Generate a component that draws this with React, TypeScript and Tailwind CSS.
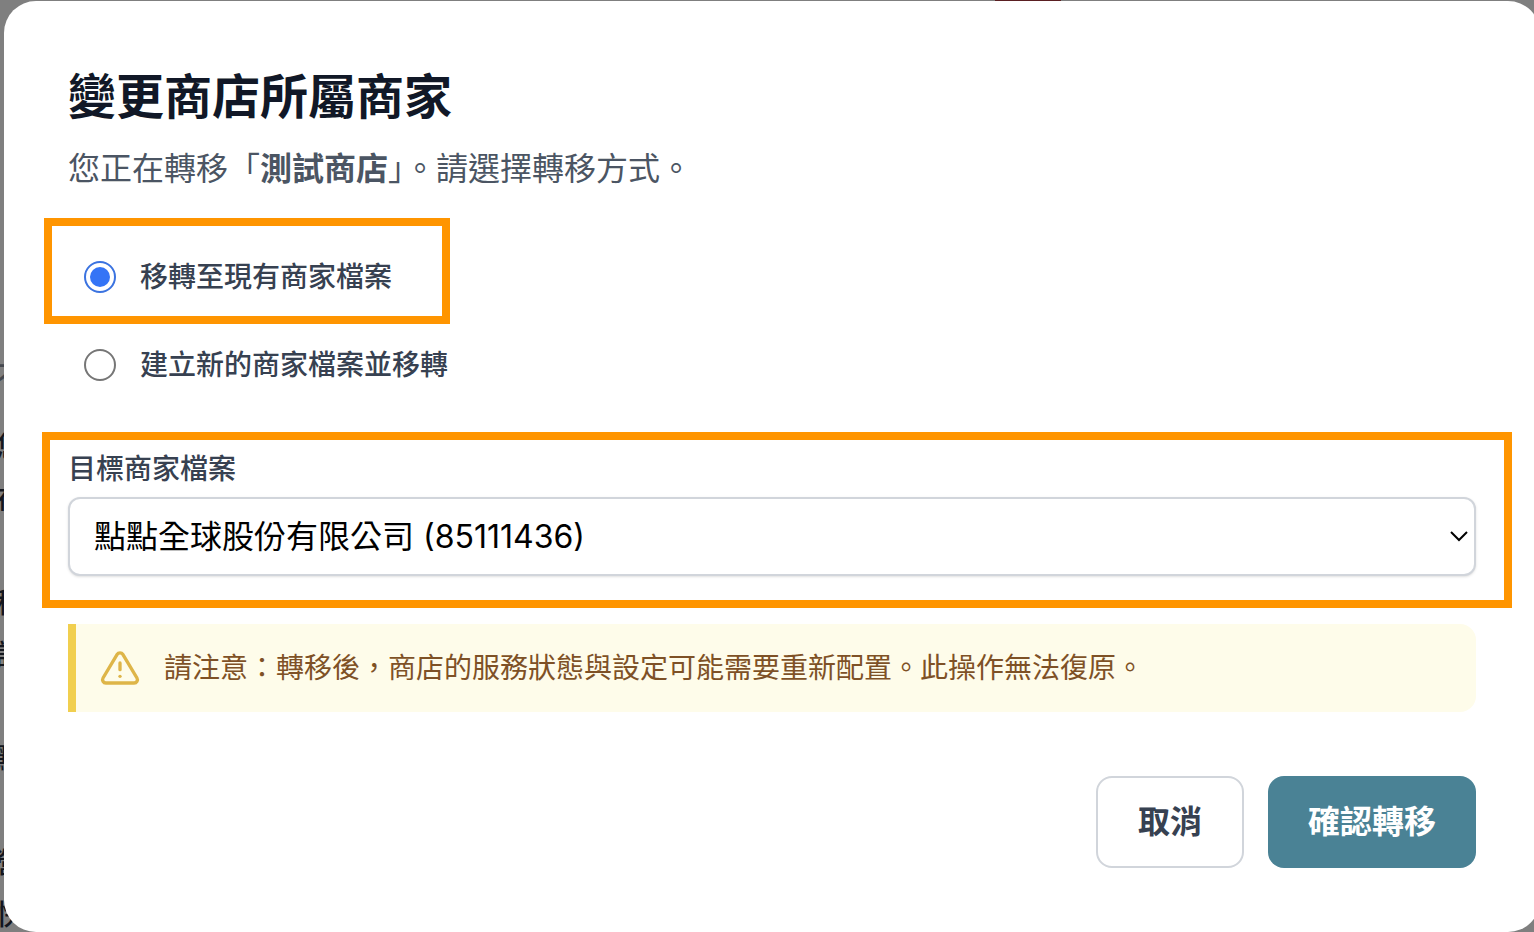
import { useState } from "react";
import { FiAlertTriangle } from "react-icons/fi";

type TransferMode = "existing" | "new";

interface Merchant {
  name: string;
  taxId: string;
}

const merchants: Merchant[] = [{ name: "點點全球股份有限公司", taxId: "85111436" }];

const modes: { value: TransferMode; label: string }[] = [
  { value: "existing", label: "移轉至現有商家檔案" },
  { value: "new", label: "建立新的商家檔案並移轉" },
];

// First column of the page text, only its edge shows beside the dialog
const pageEdge = ["您", "在", "", "移", "請", "", "點", "", "營", "快"];

// Orange frame laid over a step the guide wants to point at
const Highlight = ({ className }: { className: string }) => (
  <div className={`pointer-events-none absolute border-8 border-[#ff9500] ${className}`} />
);

export default function App() {
  const [mode, setMode] = useState<TransferMode>("existing");
  const [target, setTarget] = useState(merchants[0].taxId);

  return (
    <div
      lang="zh-Hant"
      className="relative min-h-screen overflow-hidden bg-[#7f7f7f] pl-1 pt-px font-['Inter','Noto_Sans_CJK_TC',sans-serif]"
    >
      {/* Dimmed page behind the dialog */}
      <div className="absolute right-[473px] top-0 h-2 w-[66px] bg-[#5a1f22]" />
      <div
        aria-hidden="true"
        className="absolute top-[351px] -left-1 flex flex-col text-[28px] leading-[52px] font-medium text-[#14171f]"
      >
        <span className="mb-[18px] text-[#45484f]">不</span>
        {pageEdge.map((char, index) => (
          <span key={index} className="h-[52px]">
            {char}
          </span>
        ))}
      </div>

      <div role="dialog" aria-labelledby="dialog-title" className="relative -mr-1.5 rounded-[32px] bg-white p-16">
        <h3 id="dialog-title" className="text-[48px] leading-[64px] font-bold text-[#111827]">
          變更商店所屬商家
        </h3>
        <p className="mt-4 text-[32px] leading-[48px] text-[#4b5563]">
          您正在轉移「<span className="font-bold">測試商店</span>」。請選擇轉移方式。
        </p>

        <div className="mt-12 flex flex-col items-start gap-4">
          {modes.map((m) => (
            <label key={m.value} className="relative flex items-center gap-6 p-4">
              <input
                type="radio"
                name="mode"
                value={m.value}
                checked={mode === m.value}
                onChange={() => setMode(m.value)}
                className="grid size-8 appearance-none place-items-center rounded-full border-2 border-[#767676] before:size-5 before:rounded-full checked:border-[#3b73e0] checked:before:bg-[#3474f6]"
              />
              <span className="text-[28px] leading-10 font-medium text-[#374151]">{m.label}</span>
              {m.value === "existing" && <Highlight className="-top-[23px] -right-[42px] -bottom-[11px] -left-6" />}
            </label>
          ))}
        </div>

        <div className="relative mt-12">
          <label htmlFor="target" className="block text-[28px] leading-10 font-medium text-[#374151]">
            目標商家檔案
          </label>
          <div className="relative mt-2">
            <select
              id="target"
              value={target}
              onChange={(e) => setTarget(e.target.value)}
              className="block h-[79px] w-full appearance-none rounded-xl border-2 border-[#d1d5db] bg-white px-6 text-[32px] leading-[48px] text-black shadow-sm"
            >
              {merchants.map((m) => (
                <option key={m.taxId} value={m.taxId}>
                  {m.name} ({m.taxId})
                </option>
              ))}
            </select>
            <svg
              viewBox="0 0 20 12"
              fill="none"
              stroke="black"
              strokeWidth="2"
              className="pointer-events-none absolute top-[33px] right-[7px] h-3 w-5"
              aria-hidden="true"
            >
              <path d="M2 2l8 8 8-8" />
            </svg>
          </div>
          <Highlight className="-top-[17px] -right-9 -bottom-8 -left-[26px]" />
        </div>

        <div className="mt-12 flex items-center gap-6 rounded-r-2xl border-l-8 border-[#f1cf4f] bg-[#fefcea] p-6">
          <FiAlertTriangle size={40} className="shrink-0 text-[#deb548]" />
          <p className="text-[28px] leading-10 text-[#7e5126]">
            請注意：轉移後，商店的服務狀態與設定可能需要重新配置。此操作無法復原。
          </p>
        </div>

        <div className="mt-16 flex justify-end gap-6 text-[32px] leading-[48px] font-bold">
          <button type="button" className="rounded-2xl border-2 border-[#d1d5db] bg-white px-10 py-5 text-[#374151]">
            取消
          </button>
          <button type="button" className="rounded-2xl bg-[#4a8295] px-10 py-5 text-white">
            確認轉移
          </button>
        </div>
      </div>
    </div>
  );
}
